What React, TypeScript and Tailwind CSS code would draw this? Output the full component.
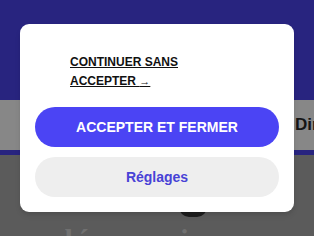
import React from "react";

export default function App() {
  return (
    <div className="relative w-[314px] h-[236px] overflow-hidden" style={{ fontFamily: '"Liberation Sans", Arial, sans-serif' }}>
      <div className="flex flex-col h-full">
        <div className="h-[100px] bg-[#28247f]" />
        <div className="h-[50px] bg-[#878787] flex items-center justify-end">
          <span className="w-[19px] overflow-hidden whitespace-nowrap text-[17px] font-bold text-[#151515]">Dir</span>
        </div>
        <div className="h-[5px] bg-[#28247f]" />
        <div className="flex-1 bg-[#5b5b5b] relative">
          <div className="absolute left-[179px] top-[42px] w-[28px] h-[20px] rounded-full bg-[#1e1e1e]" />
          <div className="absolute left-[56px] top-[67px] text-[30px] leading-[36px] font-bold text-[#707070] tracking-[3px]" style={{ fontFamily: '"Liberation Serif", serif' }}>découvrir</div>
        </div>
      </div>
      <div className="absolute left-[20px] top-[24px] w-[274px] h-[188px] bg-white rounded-[9px] shadow-md px-[15px] pt-[29px] pb-[15px] flex flex-col">
        <div className="pl-[35px] w-[200px] text-[12px] leading-[19px]">
          <a className="font-bold text-[#111] underline uppercase">
            Continuer sans accepter <span className="text-[11px]">→</span>
          </a>
        </div>
        <button className="mt-[16px] h-[40px] rounded-full bg-[#4b44f4] text-white text-[14px] font-bold">ACCEPTER ET FERMER</button>
        <button className="mt-[10px] h-[40px] rounded-full bg-[#eeeeee] text-[#4842d6] text-[14px] font-bold">Réglages</button>
      </div>
    </div>
  );
}
